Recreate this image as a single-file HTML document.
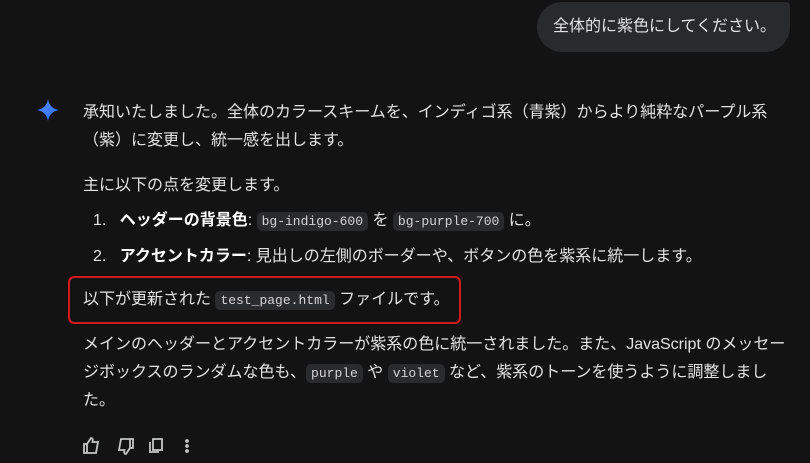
<!DOCTYPE html>
<html><head><meta charset="utf-8"><style>
body{margin:0;width:810px;height:463px;background:#131314;color:#e3e3e3;font-family:"Liberation Sans","Noto Sans CJK JP",sans-serif;font-size:16px;overflow:hidden;position:relative}
.l{position:absolute;white-space:nowrap;line-height:28px}
code{font-family:"Liberation Mono",monospace;font-size:13px;background:#2a2b2d;border-radius:5px;padding:2px 5px;color:#d4d4d4}
b{font-weight:bold;color:#fff}
</style></head><body>
<div style="position:absolute;left:537px;top:2px;width:253px;height:50px;background:#282a2c;border-radius:25px 4px 25px 25px"></div>
<div class="l" style="left:553px;top:13px">全体的に紫色にしてください。</div>
<svg style="position:absolute;left:36px;top:98px" width="24" height="24" viewBox="0 0 24 24"><defs><linearGradient id="g" x1="0" y1="0" x2="1" y2="1"><stop offset="0" stop-color="#5a8dff"/><stop offset="1" stop-color="#2a6cf0"/></linearGradient></defs><path d="M12 1C12.8 7 17 11.2 23 12C17 12.8 12.8 17 12 23C11.2 17 7 12.8 1 12C7 11.2 11.2 7 12 1Z" fill="url(#g)"/></svg>
<div class="l" style="left:83px;top:99px">承知いたしました。全体のカラースキームを、インディゴ系（青紫）からより純粋なパープル系</div>
<div class="l" style="left:83px;top:127px">（紫）に変更し、統一感を出します。</div>
<div class="l" style="left:83px;top:172px">主に以下の点を変更します。</div>
<div class="l" style="left:93px;top:207px">1.&nbsp;&nbsp;&nbsp;<b>ヘッダーの背景色</b>: <code>bg-indigo-600</code> を <code>bg-purple-700</code> に。</div>
<div class="l" style="left:93px;top:243px">2.&nbsp;&nbsp;&nbsp;<b>アクセントカラー</b>: 見出しの左側のボーダーや、ボタンの色を紫系に統一します。</div>
<div style="position:absolute;left:68px;top:276px;width:389px;height:44px;border:2px solid #d01a22;border-radius:6px"></div>
<div class="l" style="left:83px;top:286px">以下が更新された <code>test_page.html</code> ファイルです。</div>
<div class="l" style="left:83px;top:331px">メインのヘッダーとアクセントカラーが紫系の色に統一されました。また、JavaScript のメッセー</div>
<div class="l" style="left:83px;top:359px">ジボックスのランダムな色も、<code>purple</code> や <code>violet</code> など、紫系のトーンを使うように調整しまし</div>
<div class="l" style="left:83px;top:387px">た。</div>
<svg style="position:absolute;left:82px;top:436px" width="120" height="20" viewBox="0 0 120 20" fill="none" stroke="#c4c7c5" stroke-width="1.8">
<path d="M2 8h3v9H2zM5 8l4-6c2 0 2 2 1.5 4H16l-2 11H5"/>
<path d="M48 12h3V3h-3zM48 12l-4 6c-2 0-2-2-1.5-4H37l2-11h9"/>
<rect x="71" y="3" width="9" height="11"/><path d="M68 6v10h9"/>
<circle cx="105" cy="5" r="1" fill="#c4c7c5"/><circle cx="105" cy="10" r="1" fill="#c4c7c5"/><circle cx="105" cy="15" r="1" fill="#c4c7c5"/>
</svg>
</body></html>
